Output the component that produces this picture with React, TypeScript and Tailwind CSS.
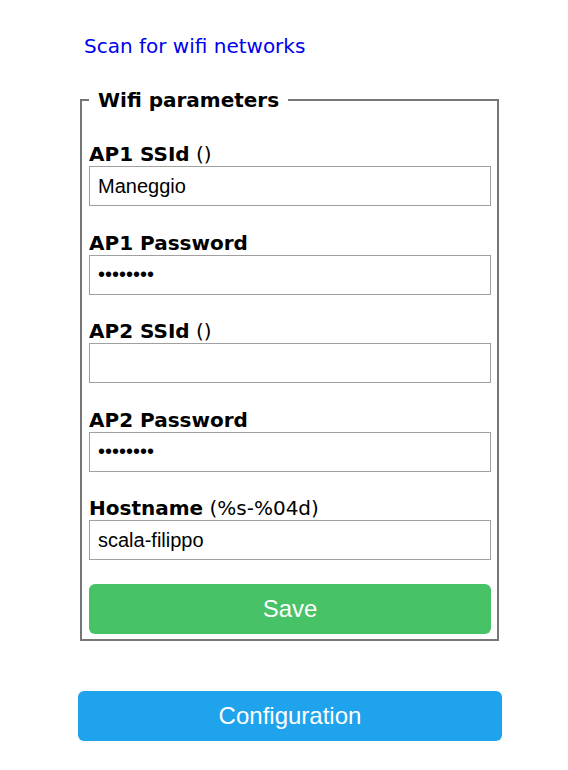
import React from "react";

const verdana = "font-['DejaVu_Sans',Verdana,sans-serif]";
const arial = "font-['Liberation_Sans',Arial,sans-serif]";

function Field({ label, hint, value }: { label: string; hint?: string; value: string }) {
  return (
    <div className="flex flex-col">
      <div className="text-[20px] leading-[normal] text-black">
        <b>{label}</b>
        {hint !== undefined ? <span> {hint}</span> : null}
      </div>
      <div
        className={`h-[40px] w-full border border-[#a0a0a0] bg-white pl-[8px] flex items-center text-[20px] leading-[normal] text-black ${arial}`}
      >
        {value}
      </div>
    </div>
  );
}

export default function App() {
  return (
    <div className={`w-[568px] min-h-[770px] bg-white leading-[normal] ${verdana}`}>
      <div className="ml-[78px] w-[424px] pt-[34px]">
        <div className="pl-[6px] text-[20px] leading-[normal]">
          <a href="#" className="text-[#0000ee] no-underline">
            Scan for wifi networks
          </a>
        </div>
        <fieldset className="mt-[30px] ml-[2px] w-[419px] border-2 border-[#777777] pl-[7px] pr-[6px] pt-[30px] pb-[5px]">
          <legend className="px-[2px] text-[20px] font-bold leading-[normal] text-black">
            {"\u00a0Wifi parameters\u00a0"}
          </legend>
          <div className="flex flex-col gap-[24.5px]">
            <Field label="AP1 SSId" hint="()" value="Maneggio" />
            <Field label="AP1 Password" value="••••••••" />
            <Field label="AP2 SSId" hint="()" value="" />
            <Field label="AP2 Password" value="••••••••" />
            <Field label="Hostname" hint="(%s-%04d)" value="scala-filippo" />
          </div>
          <button
            className={`mt-[24px] h-[50px] w-full rounded-[6px] bg-[#47c266] text-[24px] text-white ${arial}`}
          >
            Save
          </button>
        </fieldset>
        <button
          className={`mt-[50px] h-[50px] w-full rounded-[6px] bg-[#1fa3ec] text-[24px] text-white ${arial}`}
        >
          Configuration
        </button>
      </div>
    </div>
  );
}
